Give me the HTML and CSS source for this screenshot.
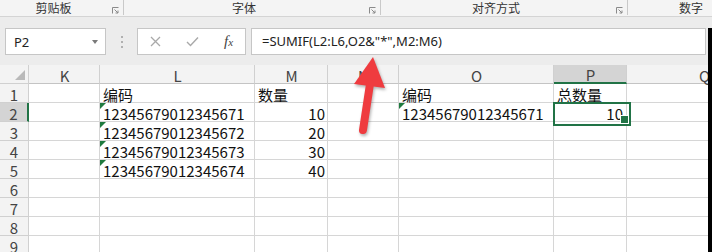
FILE: index.html
```html
<!DOCTYPE html>
<html lang="zh-CN">
<head>
<meta charset="utf-8">
<title>SUMIF</title>
<link rel="stylesheet" href="styles.css">
</head>
<body>
<div class="ribbon">
  <div class="grp g1"><span class="lbl">剪贴板</span><span class="launch"><svg width="7" height="7" viewBox="0 0 7 7"><path d="M0.5 6.5V0.5H6.5" fill="none" stroke="#8a8a8a"/><path d="M2.5 2.5L6 6M6 3.5V6H3.5" fill="none" stroke="#8a8a8a"/></svg></span></div>
  <div class="grp g2"><span class="lbl">字体</span><span class="launch"><svg width="7" height="7" viewBox="0 0 7 7"><path d="M0.5 6.5V0.5H6.5" fill="none" stroke="#8a8a8a"/><path d="M2.5 2.5L6 6M6 3.5V6H3.5" fill="none" stroke="#8a8a8a"/></svg></span></div>
  <div class="grp g3"><span class="lbl">对齐方式</span><span class="launch"><svg width="7" height="7" viewBox="0 0 7 7"><path d="M0.5 6.5V0.5H6.5" fill="none" stroke="#8a8a8a"/><path d="M2.5 2.5L6 6M6 3.5V6H3.5" fill="none" stroke="#8a8a8a"/></svg></span></div>
  <div class="grp g4"><span class="lbl">数字</span><span class="launch"></span></div>
</div>
<div class="gap"></div>
<div class="work">
  <div class="fbar">
    <div class="namebox"><span>P2</span><span class="dd"></span></div>
    <div class="dots"><i></i><i></i><i></i></div>
    <div class="fxbox">
      <span class="slot s1"><svg width="11" height="11" viewBox="0 0 11 11"><path d="M1 1L10 10M10 1L1 10" stroke="#a9a9a9" stroke-width="1.3" fill="none"/></svg></span>
      <span class="slot s2"><svg width="13" height="11" viewBox="0 0 13 11"><path d="M1 6L4.5 9.5L12 1.5" stroke="#a9a9a9" stroke-width="1.4" fill="none"/></svg></span>
      <span class="slot s3"><span class="fx">f<small>x</small></span></span>
    </div>
    <div class="formula">=SUMIF(L2:L6,O2&amp;"*",M2:M6)</div>
  </div>
  <div class="sheetwrap">
    <div class="sheet">
      <div class="corner"></div><div class="ch">K</div><div class="ch">L</div><div class="ch">M</div><div class="ch">N</div><div class="ch">O</div><div class="ch selc">P</div><div class="ch">Q</div>
      <div class="rh">1</div><div></div><div>编码</div><div>数量</div><div></div><div>编码</div><div>总数量</div><div></div>
      <div class="rh selr">2</div><div></div><div class="g">12345679012345671</div><div class="n">10</div><div></div><div class="g">12345679012345671</div><div class="n act">10</div><div></div>
      <div class="rh">3</div><div></div><div class="g">12345679012345672</div><div class="n">20</div><div></div><div></div><div></div><div></div>
      <div class="rh">4</div><div></div><div class="g">12345679012345673</div><div class="n">30</div><div></div><div></div><div></div><div></div>
      <div class="rh">5</div><div></div><div class="g">12345679012345674</div><div class="n">40</div><div></div><div></div><div></div><div></div>
      <div class="rh">6</div><div></div><div></div><div></div><div></div><div></div><div></div><div></div>
      <div class="rh">7</div><div></div><div></div><div></div><div></div><div></div><div></div><div></div>
      <div class="rh">8</div><div></div><div></div><div></div><div></div><div></div><div></div><div></div>
      <div class="rh">9</div><div></div><div></div><div></div><div></div><div></div><div></div><div></div>
    </div>
  </div>
</div>
<div class="screen-edge"></div>
<svg class="arrow" width="60" height="95" viewBox="0 0 60 95">
  <polygon points="33,7 14,34 45,38" fill="#ef3b3f"/>
  <line x1="30" y1="34" x2="23" y2="80" stroke="#ef3b3f" stroke-width="8" stroke-linecap="round"/>
</svg>
</body>
</html>
```
FILE: styles.css
```css
* { box-sizing: border-box; }
html, body { margin: 0; padding: 0; }
html { overflow: hidden; background: #ececec; }
body {
  width: 712px;
  height: 252px;
  overflow: hidden;
  position: relative;
  background: #ececec;
  font-family: "Noto Sans CJK SC", "Noto Sans", sans-serif;
}

.ribbon {
  display: flex;
  height: 17px;
  background: #f4f4f4;
  border-bottom: 1px solid #d4d4d4;
  overflow: hidden;
}
.grp {
  display: flex;
  flex: none;
  height: 15px;
  border-right: 1px solid #c9c9c9;
}
.g1 { width: 124px; }
.g2 { width: 257px; }
.g3 { width: 247px; }
.g4 { width: 142px; border-right: none; }
.lbl {
  flex: 1;
  text-align: center;
  font-size: 12px;
  line-height: 15px;
  color: #333;
}
.launch {
  width: 16px;
  display: flex;
  align-items: flex-end;
  padding: 0 0 1px 5px;
}
.launch svg { display: block; }

.gap { height: 11px; }
.work {
  width: 712px;
  height: 224px;
  overflow: hidden;
}

.fbar {
  display: flex;
  align-items: flex-start;
  height: 37px;
  padding: 0 0 0 5px;
}
.namebox {
  width: 101px;
  height: 27px;
  background: #fff;
  border: 1px solid #c6c6c6;
  display: flex;
  align-items: center;
  justify-content: space-between;
  padding: 0 7px 0 8px;
  font-size: 13px;
  color: #222;
  font-family: "Noto Sans", sans-serif;
}
.dd {
  width: 0;
  height: 0;
  border-left: 3px solid transparent;
  border-right: 3px solid transparent;
  border-top: 4px solid #7a7a7a;
}
.dots {
  width: 31px;
  height: 27px;
  display: flex;
  flex-direction: column;
  align-items: center;
  gap: 3px;
  padding-top: 8px;
}
.dots i { display: block; width: 2px; height: 2px; background: #b0b0b0; }
.fxbox {
  width: 109px;
  height: 27px;
  background: #fff;
  border: 1px solid #c6c6c6;
  display: flex;
  align-items: center;
}
.slot { display: flex; justify-content: center; align-items: center; height: 100%; }
.slot svg { display: block; }
.s1 { width: 34px; }
.s2 { width: 40px; }
.s3 { width: 33px; }
.fx {
  font-family: "Liberation Serif", serif;
  font-style: italic;
  font-size: 15px;
  color: #444;
  line-height: 1;
}
.fx small { font-size: 11px; }
.formula {
  margin-left: 5px;
  width: 455px;
  height: 27px;
  background: #fff;
  border: 1px solid #c6c6c6;
  padding-left: 10px;
  font-family: "Noto Sans", sans-serif;
  font-size: 13px;
  line-height: 25px;
  color: #222;
  white-space: nowrap;
}

.sheetwrap { width: 708px; overflow: hidden; }
.sheet {
  display: grid;
  grid-template-columns: 29px 71px 155px 73px 71px 155px 73px 155px;
  grid-auto-rows: 19px;
  background: #fff;
  width: 782px;
}
.sheet > div {
  position: relative;
  border-right: 1px solid #d6d6d6;
  border-bottom: 1px solid #d6d6d6;
  display: flex;
  align-items: flex-end;
  padding: 0 2px 0 3px;
  font-size: 15px;
  line-height: 15px;
  color: #111;
  white-space: nowrap;
}
.sheet > .ch, .sheet > .rh, .sheet > .corner {
  background: #f3f3f3;
  color: #444;
  justify-content: center;
  border-color: #d0d0d0;
}
.sheet > .ch { border-bottom-color: #c4c4c4; }
.sheet > .rh { padding: 0; }
.corner::after {
  content: "";
  position: absolute;
  right: 3px;
  bottom: 3px;
  border-left: 10px solid transparent;
  border-bottom: 10px solid #b9b9b9;
}
.sheet > .selc { background: #d4d4d4; border-bottom: 2px solid #217346; }
.sheet > .selr { background: #d4d4d4; border-right: 2px solid #217346; }
.sheet > .n { justify-content: flex-end; }
.sheet > .act { padding-right: 3px; }
.g::before {
  content: "";
  position: absolute;
  left: 0;
  top: 0;
  border-top: 6px solid #1f7a3f;
  border-right: 6px solid transparent;
}
.act::after {
  content: "";
  position: absolute;
  left: -1px;
  top: -1px;
  width: 74px;
  height: 20px;
  border: 2px solid #217346;
  z-index: 2;
}
.act::before {
  content: "";
  position: absolute;
  right: -3px;
  bottom: -3px;
  width: 7px;
  height: 7px;
  background: #217346;
  border: 1px solid #fff;
  z-index: 3;
}

/* dark bezel of the captured screen, lying over the sheet's right edge */
.screen-edge {
  position: absolute;
  left: 708px;
  top: 28px;
  width: 4px;
  height: 224px;
  background: #000;
  z-index: 6;
}

.arrow {
  position: absolute;
  left: 340px;
  top: 50px;
  z-index: 5;
  filter: drop-shadow(1px 2px 1.5px rgba(0, 0, 0, 0.3));
}
```
